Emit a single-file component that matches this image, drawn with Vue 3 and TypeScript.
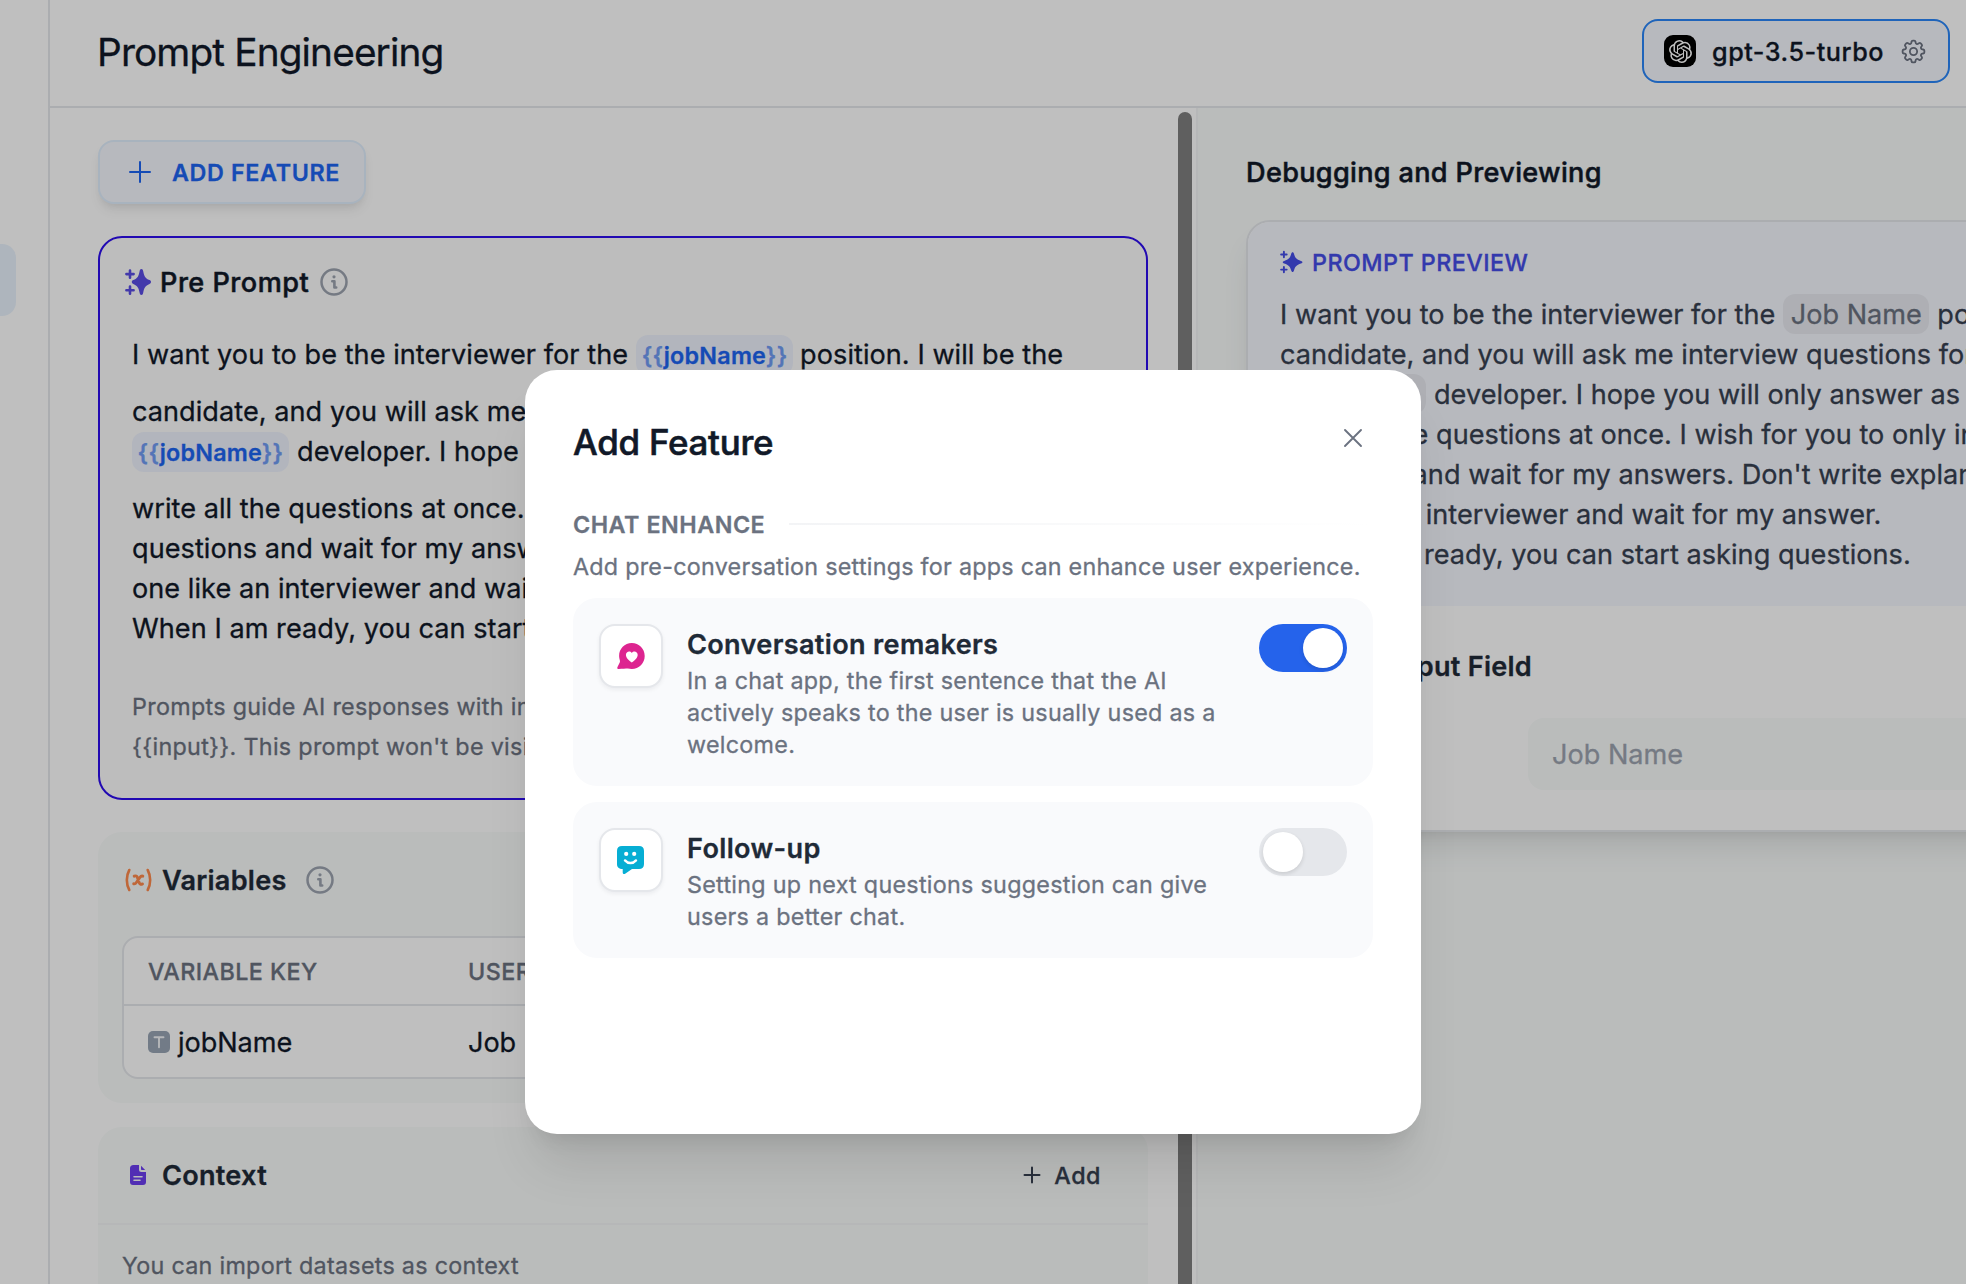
<script setup lang="ts">
import { ref } from 'vue'

interface Feature {
  id: string
  icon: 'heart' | 'smile'
  title: string
  lines: string[]
  on: boolean
}

const features = ref<Feature[]>([
  {
    id: 'opening',
    icon: 'heart',
    title: 'Conversation remakers',
    lines: ['In a chat app, the first sentence that the AI', 'actively speaks to the user is usually used as a', 'welcome.'],
    on: true,
  },
  {
    id: 'follow-up',
    icon: 'smile',
    title: 'Follow-up',
    lines: ['Setting up next questions suggestion can give', 'users a better chat.'],
    on: false,
  },
])

const open = '{{'
const close = '}}'
const hint = ['Prompts guide AI responses with instructions and constraints. Insert variables like', '{{input}}. This prompt won\'t be visible to users.']
</script>

<template>
  <div class="page">
    <aside class="rail"><div class="rail-item"></div></aside>

    <div class="main">
      <header class="header">
        <h1>Prompt Engineering</h1>
        <button class="model">
          <span class="model-logo">
            <svg viewBox="0 0 24 24" width="23" height="23" fill="#fff"><path d="M22.2819 9.8211a5.9847 5.9847 0 0 0-.5157-4.9108 6.0462 6.0462 0 0 0-6.5098-2.9A6.0651 6.0651 0 0 0 4.9807 4.1818a5.9847 5.9847 0 0 0-3.9977 2.9 6.0462 6.0462 0 0 0 .7427 7.0966 5.98 5.98 0 0 0 .511 4.9107 6.051 6.051 0 0 0 6.5146 2.9001A5.9847 5.9847 0 0 0 13.2599 24a6.0557 6.0557 0 0 0 5.7718-4.2058 5.9894 5.9894 0 0 0 3.9977-2.9001 6.0557 6.0557 0 0 0-.7475-7.0729zm-9.022 12.6081a4.4755 4.4755 0 0 1-2.8764-1.0408l.1419-.0804 4.7783-2.7582a.7948.7948 0 0 0 .3927-.6813v-6.7369l2.02 1.1686a.071.071 0 0 1 .038.052v5.5826a4.504 4.504 0 0 1-4.4945 4.4944zm-9.6607-4.1254a4.4708 4.4708 0 0 1-.5346-3.0137l.142.0852 4.783 2.7582a.7712.7712 0 0 0 .7806 0l5.8428-3.3685v2.3324a.0804.0804 0 0 1-.0332.0615L9.74 19.9502a4.4992 4.4992 0 0 1-6.1408-1.6464zM2.3408 7.8956a4.485 4.485 0 0 1 2.3655-1.9728V11.6a.7664.7664 0 0 0 .3879.6765l5.8144 3.3543-2.0201 1.1685a.0757.0757 0 0 1-.071 0l-4.8303-2.7865A4.504 4.504 0 0 1 2.3408 7.872zm16.5963 3.8558L13.1038 8.364 15.1192 7.2a.0757.0757 0 0 1 .071 0l4.8303 2.7913a4.4944 4.4944 0 0 1-.6765 8.1042v-5.6772a.79.79 0 0 0-.407-.667zm2.0107-3.0231l-.142-.0852-4.7735-2.7818a.7759.7759 0 0 0-.7854 0L9.409 9.2297V6.8974a.0662.0662 0 0 1 .0284-.0615l4.8303-2.7866a4.4992 4.4992 0 0 1 6.6802 4.66zM8.3065 12.863l-2.02-1.1638a.0804.0804 0 0 1-.038-.0567V6.0742a4.4992 4.4992 0 0 1 7.3757-3.4537l-.142.0805L8.704 5.459a.7948.7948 0 0 0-.3927.6813zm1.0976-2.3654l2.602-1.4998 2.6069 1.4998v2.9994l-2.5974 1.4997-2.6067-1.4997Z" /></svg>
          </span>
          <span class="model-name">gpt-3.5-turbo</span>
          <svg class="gear" viewBox="0 0 24 24" width="29" height="29" fill="none" stroke="#6b7280" stroke-width="1.5"><path d="M10.343 3.94c.09-.542.56-.94 1.11-.94h1.093c.55 0 1.02.398 1.11.94l.149.894c.07.424.384.764.78.93.398.164.855.142 1.205-.108l.737-.527a1.125 1.125 0 011.45.12l.773.774c.39.389.44 1.002.12 1.45l-.527.737c-.25.35-.272.806-.107 1.204.165.397.505.71.93.78l.893.15c.543.09.94.56.94 1.109v1.094c0 .55-.397 1.02-.94 1.11l-.893.149c-.425.07-.765.383-.93.78-.165.398-.143.854.107 1.204l.527.738c.32.447.269 1.06-.12 1.45l-.774.773a1.125 1.125 0 01-1.449.12l-.738-.527c-.35-.25-.806-.272-1.203-.107-.397.165-.71.505-.781.929l-.149.894c-.09.542-.56.94-1.11.94h-1.094c-.55 0-1.019-.398-1.11-.94l-.148-.894c-.071-.424-.384-.764-.781-.93-.398-.164-.854-.142-1.204.108l-.738.527c-.447.32-1.06.269-1.45-.12l-.773-.774a1.125 1.125 0 01-.12-1.45l.527-.737c.25-.35.273-.806.108-1.204-.165-.397-.505-.71-.93-.78l-.894-.15c-.542-.09-.94-.56-.94-1.109v-1.094c0-.55.398-1.02.94-1.11l.894-.149c.424-.07.765-.383.93-.78.165-.398.143-.854-.107-1.204l-.527-.738a1.125 1.125 0 01.12-1.45l.773-.773a1.125 1.125 0 011.45-.12l.737.527c.35.25.807.272 1.204.107.397-.165.71-.505.78-.929l.15-.894z" /><path d="M15 12a3 3 0 11-6 0 3 3 0 016 0z" /></svg>
        </button>
      </header>

      <div class="columns">
        <section class="config">
          <button class="add-feature">
            <svg viewBox="0 0 22 22" width="22" height="22" fill="none" stroke="#1c64f2" stroke-width="2" stroke-linecap="round"><path d="M11 1v20M1 11h20" /></svg>
            <span>ADD FEATURE</span>
          </button>

          <div class="prompt-card">
            <div class="prompt-head">
              <svg viewBox="0 0 26 26" width="26" height="26" fill="#5a4ce4"><path d="M16.4 0c1 0 1.500.8 1.800 2.200 1 5.200 2 7 6.300 8.900.9.400 1.500 1 1.500 1.900s-.6 1.500-1.500 1.900c-4.300 1.900-5.300 3.700-6.300 8.900-.3 1.400-.8 2.200-1.800 2.200s-1.500-.8-1.800-2.200c-1-5.200-2-7-6.300-8.900-.9-.4-1.500-1-1.500-1.900s.6-1.500 1.500-1.900c4.300-1.900 5.300-3.700 6.300-8.900.3-1.400.8-2.200 1.800-2.200z" /><path d="M5 1.500v7.200M1.400 5.100h7.200M5 17.600v7.200M1.400 21.200h7.200" stroke="#5a4ce4" stroke-width="2.600" stroke-linecap="round" /></svg>
              <h2>Pre Prompt</h2>
              <svg class="info" viewBox="0 0 28 28" width="28" height="28" fill="none" stroke="#9ca3af"><circle cx="14" cy="14" r="12.500" stroke-width="2.500" /><circle cx="14" cy="8.800" r="1.600" fill="#9ca3af" stroke="none" /><path d="M12.300 13.300h2.100v6.200h1.800" stroke-width="2.600" stroke-linecap="round" stroke-linejoin="round" /></svg>
            </div>
            <div class="prompt-body">
              <div class="line spaced"><span>I want you to be the interviewer for the</span><span class="var"><i>{{ open }}</i>jobName<i>{{ close }}</i></span><span>position. I will be the</span></div>
              <div class="line">candidate, and you will ask me interview questions for the</div>
              <div class="line spaced"><span class="var first"><i>{{ open }}</i>jobName<i>{{ close }}</i></span><span>developer. I hope you will only answer as the</span></div>
              <div class="line">write all the questions at once. I wish for you to only ask</div>
              <div class="line">questions and wait for my answers. Don't write</div>
              <div class="line">one like an interviewer and wait for my answer.</div>
              <div class="line">When I am ready, you can start asking questions.</div>
            </div>
            <div class="hint"><div v-for="h in hint" :key="h">{{ h }}</div></div>
          </div>

          <div class="panel variables">
            <div class="panel-head">
              <svg viewBox="0 0 27 24" width="27" height="24" fill="none" stroke="#ff8a4c" stroke-width="2.600" stroke-linecap="round"><path d="M4.300 2C1 8 1 16 4.300 22M22.700 2c3.300 6 3.300 14 0 20" /><path d="M9.200 8.200c1.800-.8 2.600-.3 3.200 1.300l1.700 5c.6 1.700 1.700 2.200 3.400 1.400M17.800 8.200c-1.300-.5-2.100.1-3.100 1.400l-3 4.400c-1 1.500-1.700 2.200-3 1.800" stroke-width="2.900" /></svg>
              <h3>Variables</h3>
              <svg class="info" viewBox="0 0 28 28" width="28" height="28" fill="none" stroke="#9ca3af"><circle cx="14" cy="14" r="12.500" stroke-width="2.500" /><circle cx="14" cy="8.800" r="1.600" fill="#9ca3af" stroke="none" /><path d="M12.300 13.300h2.100v6.200h1.800" stroke-width="2.600" stroke-linecap="round" stroke-linejoin="round" /></svg>
            </div>
            <div class="table">
              <div class="tr th"><div class="c1">VARIABLE KEY</div><div>USER INPUT FIELD NAME</div></div>
              <div class="tr td">
                <div class="c1">
                  <svg viewBox="0 0 22 22" width="22" height="22"><rect width="22" height="22" rx="5" fill="#98a5b5" /><path d="M6.500 6.200h9M11 6.200v10" stroke="#f3f5f8" stroke-width="1.900" fill="none" stroke-linecap="round" /></svg>
                  <span>jobName</span>
                </div>
                <div>Job Name</div>
              </div>
            </div>
          </div>

          <div class="panel context">
            <div class="context-head">
              <svg viewBox="0 0 16 20" width="16" height="20"><path d="M3.500 0H9v4.500C9 6.200 9.800 7 11.500 7H16v10c0 2-1 3-3 3H3c-2 0-3-1-3-3V3.500C0 1.200 1.200 0 3.500 0z" fill="#6c3ef0" /><path d="M11 .8 15.200 5h-3.200c-.7 0-1-.3-1-1z" fill="#6c3ef0" /><path d="M4 11.700h8M4 15.300h6" stroke="#f9fafb" stroke-width="1.600" stroke-linecap="round" /></svg>
              <h3>Context</h3>
              <div class="add">
                <svg viewBox="0 0 18 18" width="18" height="18" fill="none" stroke="#374151" stroke-width="2" stroke-linecap="round"><path d="M9 1.500v15M1.500 9h15" /></svg>
                <span>Add</span>
              </div>
            </div>
            <p>You can import datasets as context</p>
          </div>
        </section>

        <div class="scroll"><div class="thumb"></div></div>

        <section class="debug">
          <h2>Debugging and Previewing</h2>
          <div class="preview-card">
            <div class="preview">
              <div class="preview-head">
                <svg viewBox="0 0 23 22" width="23" height="22" fill="#444ce7"><path d="M12.600 1.300c.7 0 1.100.6 1.400 1.500 1 4 2.300 5.300 7 7.200.9.300 1.400.6 1.400 1.200s-.5.900-1.400 1.200c-4.700 1.600-6 3.100-7 7.200-.3.900-.7 1.500-1.400 1.500s-1.100-.6-1.400-1.500c-1-4.100-2.300-5.600-7-7.200-.9-.3-1.400-.6-1.400-1.200s.5-.9 1.400-1.200c4.700-1.900 6-3.200 7-7.200.3-.9.700-1.500 1.400-1.500z" /><path d="M3.900.8v5.400M1.100 3.500h5.600M3.900 15.900v5.400M1.100 18.600h5.600" stroke="#444ce7" stroke-width="1.900" stroke-linecap="round" /></svg>
                <span>PROMPT PREVIEW</span>
              </div>
              <div class="pline"><span>I want you to be the interviewer for the</span><span class="chip">Job Name</span><span>position. I will be the</span></div>
              <div class="pline">candidate, and you will ask me interview questions for the</div>
              <div class="pline"><span class="chip first">Job Name</span><span>developer. I hope you will only answer as the interviewer.</span></div>
              <div class="pline">write all the questions at once. I wish for you to only interview</div>
              <div class="pline">questions and wait for my answers. Don't write explanations.</div>
              <div class="pline">one like an interviewer and wait for my answer.</div>
              <div class="pline">When I am ready, you can start asking questions.</div>
            </div>
            <div class="inputs">
              <h3>User Input Field</h3>
              <div class="field">Job Name</div>
            </div>
          </div>
        </section>
      </div>
    </div>

    <div class="overlay">
      <div class="modal">
        <div class="modal-head">
          <h2>Add Feature</h2>
          <svg viewBox="0 0 20 20" width="20" height="20" fill="none" stroke="#6b7280" stroke-width="1.900" stroke-linecap="round"><path d="M2 2l16 16M18 2 2 18" /></svg>
        </div>
        <div class="group"><span>CHAT ENHANCE</span><div class="rule"></div></div>
        <p class="group-desc">Add pre-conversation settings for apps can enhance user experience.</p>
        <div class="feature" v-for="f in features" :key="f.id">
          <div class="ficon">
            <svg v-if="f.icon === 'heart'" viewBox="0 0 28 26" width="28" height="26"><path d="M14.800 0C22 0 27.700 5.700 27.700 12.900S22 25.900 14.800 25.900c-1.500 0-2.700-.3-4-.3-1.900 0-5.700.4-9.100.4C.4 26-.1 25 .5 23.900l2.100-4.100c.6-1.200.4-1.800.1-3.100-.3-1.300-.6-2.500-.6-3.800C2.100 5.700 7.600 0 14.800 0z" fill="#dd2590" /><path d="M14.800 19.400c-.4 0-5.900-3.900-5.900-7.500 0-3.200 4-4.600 5.900-1.900 1.900-2.700 5.900-1.300 5.900 1.900 0 3.600-5.500 7.500-5.900 7.500z" fill="#fff" /></svg>
            <svg v-else viewBox="0 0 28 28" width="28" height="28"><path d="M5 0h17c3.300 0 5 1.700 5 5v13c0 3.300-1.700 5-5 5h-7l-6.500 4.400c-1.700 1.100-2.800.6-2.800-1.200V23C2 23 0 21.300 0 18V5c0-3.300 1.700-5 5-5z" fill="#06aed4" /><circle cx="9.200" cy="7.900" r="2.100" fill="#fff" /><circle cx="17.200" cy="7.900" r="2.100" fill="#fff" /><path d="M8 14.400c3 3.500 8 3.500 11 0" fill="none" stroke="#fff" stroke-width="2.400" stroke-linecap="round" /></svg>
          </div>
          <div class="ftext">
            <h4>{{ f.title }}</h4>
            <div v-for="l in f.lines" :key="l" class="fline">{{ l }}</div>
          </div>
          <button class="toggle" :class="{ on: f.on }" @click="f.on = !f.on"><span></span></button>
        </div>
      </div>
    </div>
  </div>
</template>

<style>
body { overflow: hidden; }
</style>

<style scoped>
* { box-sizing: border-box; }
h1, h2, h3, h4, p { margin: 0; font-size: inherit; font-weight: inherit; }
button { font: inherit; color: inherit; }
svg { display: block; flex: none; overflow: visible; }
.page { position: relative; display: flex; width: 100vw; height: 100vh; overflow: hidden; background: #fff; color: #111928; font-family: Inter, "Liberation Sans", sans-serif; font-size: 27.1px; font-weight: 400; white-space: nowrap; -webkit-text-stroke-width: .3px; }
.rail { flex: none; width: 50px; border-right: 2px solid #e5e7eb; padding-top: 244px; }
.rail-item { width: 16px; height: 72px; border-radius: 0 14px 14px 0; background: #e9f2fc; }
.main { flex: 1; min-width: 0; display: flex; flex-direction: column; }
.header { flex: none; height: 108px; display: flex; justify-content: space-between; align-items: flex-start; padding: 19px 16px 0 47px; border-bottom: 2px solid #e5e7eb; }
h1 { font-size: 38.8px; line-height: 66px; letter-spacing: -.88px; color: #111928; }
.model { display: flex; align-items: center; width: 308px; height: 64px; padding: 0 0 0 20px; border: 2px solid #2a86f8; border-radius: 16px; background: #f5f7fe; }
.model-logo { display: flex; align-items: center; justify-content: center; width: 32px; height: 32px; border-radius: 9px; background: #000; }
.model-name { margin-left: 16px; padding-top: 2px; width: 188px; text-align: left; font-size: 25.2px; font-weight: 500; letter-spacing: .53px; }
.gear { margin-left: -1px; }
.columns { flex: 1; min-height: 0; display: flex; }
.config { flex: none; width: 1128px; padding: 32px 30px 0 48px; overflow: hidden; }
.add-feature { display: flex; align-items: center; gap: 21px; width: 268px; height: 64px; padding: 0 0 0 29px; border: 2px solid #e1effe; border-radius: 16px; background: #f5f7fe; color: #1c64f2; font-size: 23.3px; font-weight: 600; letter-spacing: .64px; box-shadow: 0 8px 12px -2px rgba(0, 0, 0, .08), 0 4px 8px -4px rgba(0, 0, 0, .08); }
.prompt-card { margin-top: 32px; height: 564px; border: 2px solid #2d0dee; border-radius: 24px; background: #fcfcfc; padding: 24px 0 0 25px; }
.prompt-head { display: flex; align-items: center; height: 40px; }
.prompt-head h2 { margin-left: 9px; font-weight: 500; letter-spacing: .5px; -webkit-text-stroke-width: .5px; }
.prompt-head .info { margin-left: 11px; }
.prompt-body { margin: 33px 0 0 7px; letter-spacing: .05px; }
.line { display: flex; height: 40px; line-height: 40px; }
.pline { display: flex; height: 40px; line-height: 42px; }
.line.spaced { margin-bottom: 17px; }
.var { flex: none; margin: 0 7px 0 8px; width: 157px; height: 40px; line-height: 42px; text-align: center; border-radius: 12px; background: #eef2fc; color: #1c64f2; font-size: 23.3px; font-weight: 600; letter-spacing: .25px; }
.var.first { margin: 0 8px 0 0; }
.var i { font-style: normal; opacity: .6; }
.hint { margin: 38px 0 0 7px; font-size: 23.3px; line-height: 40px; letter-spacing: .31px; color: #6b7280; }
.panel { border-radius: 24px; background: #f8fbfa; }
.variables { margin-top: 32px; height: 271px; padding: 24px 24px 0; }
.panel-head { display: flex; align-items: center; height: 48px; padding-left: 3px; }
h3 { font-weight: 600; color: #1f2a37; letter-spacing: .25px; }
.panel-head h3 { margin-left: 10px; }
.panel-head .info { margin-left: 19px; }
.table { margin-top: 32px; height: 143px; border: 2px solid #e5e7eb; border-radius: 16px; background: #fff; overflow: hidden; }
.tr { display: flex; align-items: center; padding-left: 24px; }
.c1 { width: 320px; display: flex; align-items: center; }
.th { height: 68px; border-bottom: 2px solid #e5e7eb; font-size: 23.3px; font-weight: 500; letter-spacing: .44px; color: #6b7280; }
.td { height: 72px; letter-spacing: -.05px; }
.td span { margin-left: 8px; }
.context { margin-top: 24px; height: 300px; }
.context-head { display: flex; align-items: center; height: 98px; padding: 0 47px 0 32px; border-bottom: 2px solid #f3f4f6; }
.context-head h3 { margin-left: 16px; flex: 1; }
.add { display: flex; align-items: center; gap: 13px; color: #374151; font-size: 23.3px; font-weight: 500; letter-spacing: .5px; }
.context p { padding: 21px 0 0 24px; line-height: 40px; font-size: 23.3px; letter-spacing: .28px; color: #6b7280; }
.scroll { flex: none; width: 18px; padding-top: 4px; }
.thumb { width: 14px; height: 1400px; border-radius: 7px; background: #7f7f7f; }
.debug { flex: 1; min-width: 0; overflow: hidden; border-left: 2px solid #f3f4f6; background: #f8fbfa; padding: 44px 0 0 48px; }
.debug h2 { height: 40px; line-height: 42px; font-weight: 500; letter-spacing: .33px; -webkit-text-stroke-width: .5px; }
.preview-card { margin-top: 28px; width: 800px; height: 612px; overflow: visible; border: 2px solid #e5e7eb; border-radius: 24px 24px 0 0; background: #fff; box-shadow: 0 20px 30px -6px rgba(0, 0, 0, .1), 0 8px 12px -8px rgba(0, 0, 0, .1); }
.preview { height: 384px; padding: 24px 0 0 32px; border-radius: 22px 22px 0 0; background: #f5f7fe; color: #374151; letter-spacing: .03px; }
.preview-head { display: flex; align-items: center; height: 32px; margin-bottom: 16px; color: #444ce7; font-size: 23.3px; font-weight: 500; letter-spacing: .46px; }
.preview-head span { margin-left: 9px; }
.chip { flex: none; width: 146px; height: 40px; margin: 0 8px; text-align: center; border-radius: 12px; background: rgba(0, 0, 0, .05); color: #6b7280; letter-spacing: 0; }
.chip.first { margin-left: 0; }
.inputs { padding: 40px 0 0 32px; }
.inputs h3 { width: 252px; line-height: 42px; text-align: right; }
.field { margin: 30px 0 0 248px; width: 460px; height: 72px; padding-left: 24px; line-height: 74px; border-radius: 16px; background: #f8fbfa; color: #9ca3af; letter-spacing: 0; }
.overlay { position: absolute; inset: 0; padding: 370px 0 0 525px; background: rgba(0, 0, 0, .25); }
.modal { width: 896px; height: 764px; padding: 48px; border-radius: 32px; background: #fff; box-shadow: 0 40px 50px -10px rgba(0, 0, 0, .1), 0 16px 20px -12px rgba(0, 0, 0, .1); }
.modal-head { display: flex; justify-content: space-between; align-items: flex-start; height: 81px; padding-right: 10px; }
.modal-head h2 { font-size: 34.9px; line-height: 48px; font-weight: 500; letter-spacing: -.25px; -webkit-text-stroke-width: .6px; }
.modal-head svg { margin-top: 10px; }
.group { display: flex; align-items: center; height: 50px; color: #6b7280; font-size: 23.3px; font-weight: 600; letter-spacing: .54px; }
.rule { flex: 1; height: 2px; margin-left: 24px; background: linear-gradient(90deg, #f3f4f6, rgba(243, 244, 246, 0)); }
.group-desc { line-height: 36px; margin-bottom: 13px; font-size: 23.3px; letter-spacing: .26px; color: #6b7280; }
.feature { display: flex; align-items: flex-start; padding: 26px; margin-bottom: 16px; border-radius: 24px; background: #f9fafc; }
.ficon { display: flex; align-items: center; justify-content: center; width: 64px; height: 64px; border: 2px solid #e5e7eb; border-radius: 16px; background: #fff; box-shadow: 0 2px 4px rgba(16, 24, 40, .06); }
.ftext { flex: 1; margin: 2px 0 -1px 24px; }
.ftext h4 { margin-bottom: 1px; line-height: 38px; font-weight: 600; letter-spacing: .33px; color: #1f2a37; }
.fline { line-height: 32px; font-size: 23.3px; letter-spacing: .29px; color: #6b7280; }
.toggle { display: flex; width: 88px; height: 48px; padding: 4px; border: 0; border-radius: 24px; background: #e5e7eb; }
.toggle span { width: 40px; height: 40px; border-radius: 50%; background: #fff; box-shadow: 0 2px 4px rgba(0, 0, 0, .12); }
.toggle.on { justify-content: flex-end; background: #2563eb; }
</style>
